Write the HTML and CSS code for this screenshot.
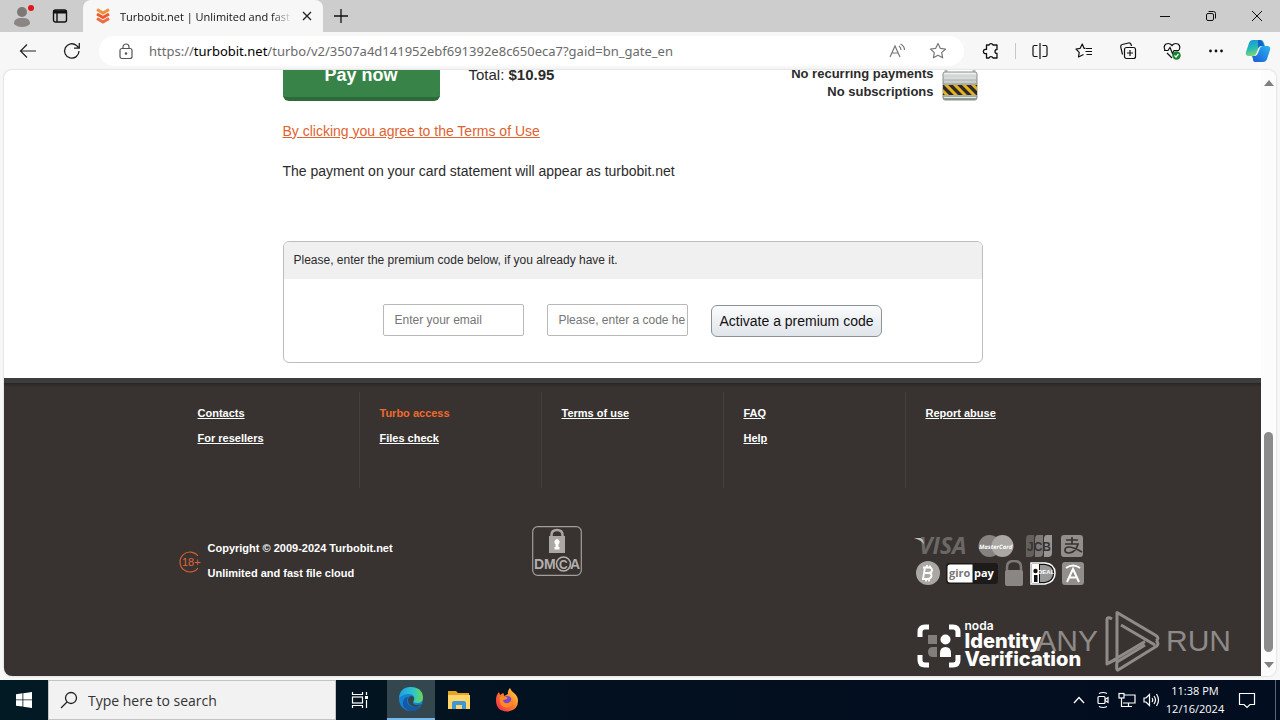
FILE: index.html
```html
<!DOCTYPE html>
<html lang="en">
<head>
<meta charset="utf-8">
<title>Turbobit.net | Unlimited and fast file cloud</title>
<link rel="stylesheet" href="styles.css">
</head>
<body>
<div class="desktop">
  <header class="tabstrip">
    <button class="tool tool-profile" aria-label="Profile"><svg width="24" height="24" viewBox="0 0 24 24"><circle cx="12" cy="8" r="5" fill="#7d7876"/><path d="M4 20c0-5 3-6 8-6s8 1 8 6q-3 3-8 3t-8-3z" fill="#8b8684"/><circle cx="21" cy="4" r="3" fill="#e3141b"/></svg></button>
    <button class="tool tool-tabs" aria-label="Tab actions"><svg width="16" height="16" viewBox="0 0 16 16" fill="none" stroke="#111" stroke-width="1.4"><rect x="1.5" y="2" width="13" height="12" rx="2"/><path d="M1.5 4h13" stroke-width="3"/><path d="M5 4v10"/></svg></button>
    <div class="tab">
      <svg width="14" height="16" viewBox="0 0 14 16" fill="none" stroke-width="3"><path d="M1 1.5l6 3.5 6-3.5" stroke="#f2913d"/><path d="M1 6l6 3.500 6-3.500" stroke="#ef5b2b"/><path d="M1 10.500l6 3.500 6-3.500" stroke="#ee6c43"/></svg>
      <span class="tab-title">Turbobit.net | Unlimited and fast</span>
      <button class="tab-close" aria-label="Close tab"><svg width="10" height="10" viewBox="0 0 10 10" stroke="#222" stroke-width="1.300"><path d="M1 1l8 8M9 1l-8 8"/></svg></button>
    </div>
    <button class="tool tool-new" aria-label="New tab"><svg width="14" height="14" viewBox="0 0 14 14" stroke="#111" stroke-width="1.300"><path d="M7 0v14M0 7h14"/></svg></button>
    <div class="window-buttons">
      <button class="tool" aria-label="Minimize"><svg width="12" height="12" viewBox="0 0 12 12" stroke="#111"><path d="M1 6.500h10"/></svg></button>
      <button class="tool" aria-label="Restore"><svg width="12" height="12" viewBox="0 0 12 12" fill="none" stroke="#111"><rect x="1.500" y="3.500" width="7" height="7" rx="1.500"/><path d="M3.500 1.500h5q2 0 2 2v5"/></svg></button>
      <button class="tool" aria-label="Close"><svg width="12" height="12" viewBox="0 0 12 12" stroke="#111"><path d="M1 1l10 10M11 1L1 11"/></svg></button>
    </div>
  </header>

  <nav class="toolbar">
    <button class="tool" aria-label="Back"><svg width="18" height="16" viewBox="0 0 18 16" fill="none" stroke="#222" stroke-width="1.200"><path d="M17 8H1.500M8 1.500L1.500 8 8 14.500"/></svg></button>
    <button class="tool" aria-label="Refresh"><svg width="18" height="18" viewBox="0 0 18 18" fill="none" stroke="#222" stroke-width="1.300"><path d="M16 9a7.200 7.200 0 1 1-2.500-5.500L16 6M16.300 1v5.200H11"/></svg></button>
    <div class="address">
      <svg width="14" height="17" viewBox="0 0 14 17" fill="none" stroke="#555" stroke-width="1.200"><rect x="1" y="5.500" width="12" height="10" rx="2"/><path d="M4 5.500V4a3 3 0 0 1 6 0v1.500"/><circle cx="7" cy="10.500" r=".7" fill="#555"/></svg>
      <div class="url" role="textbox" aria-label="Address">https://<b class="host">turbobit.net</b>/turbo/v2/3507a4d141952ebf691392e8c650eca7?gaid=bn_gate_en</div>
      <button class="tool" aria-label="Read aloud"><svg width="18" height="16" viewBox="0 0 18 16" fill="none" stroke="#777" stroke-width="1.200"><path d="M1 14L6 3l5 11M3 10h6M10 3q2 1.500 2 4M11.500 1q4 2 4 6"/></svg></button>
      <button class="tool" aria-label="Add to favorites"><svg width="18" height="18" viewBox="0 0 18 18" fill="none" stroke="#777" stroke-width="1.200" stroke-linejoin="round"><path d="M9 1.500l2.300 4.800 5.200.7-3.800 3.600.9 5.200L9 13.300l-4.600 2.500.9-5.200L1.500 7l5.200-.7z"/></svg></button>
    </div>
    <button class="tool" aria-label="Extensions"><svg width="18" height="18" viewBox="0 0 18 18" fill="none" stroke="#111" stroke-width="1.300" stroke-linejoin="round"><path d="M4.500 3H7a2.100 2.100 0 0 1 4 0h4v4.500a2 2 0 0 0 0 4V16h-4a2.100 2.100 0 0 0-4 0H4.500v-4.500a2.200 2.200 0 1 1 0-4z"/></svg></button>
    <span class="separator"></span>
    <button class="tool" aria-label="Split screen"><svg width="18" height="18" viewBox="0 0 18 18" fill="none" stroke="#111" stroke-width="1.200"><path d="M6.500 3.500h-3q-1.500 0-1.500 1.500v8q0 1.500 1.500 1.500h3M11.500 3.500h3q1.500 0 1.500 1.500v8q0 1.500-1.500 1.500h-3M9 1v16"/></svg></button>
    <button class="tool" aria-label="Favorites"><svg width="18" height="18" viewBox="0 0 18 18" fill="none" stroke="#111" stroke-width="1.200" stroke-linejoin="round"><path d="M10.500 6.300H9L7.300 2 5.200 6.300l-4.200.7 3.200 3.300L3.500 15l5-2.500M11 6.500h6M10.500 9.500H17M11.500 12.500H17"/></svg></button>
    <button class="tool" aria-label="Collections"><svg width="18" height="18" viewBox="0 0 18 18" fill="none" stroke="#111" stroke-width="1.200"><rect x="5.500" y="5.500" width="11" height="11" rx="2"/><path d="M11 8v6M8 11h6M3.500 12.500L1.700 5q-.3-2 1.500-2.500L9.500 1q2-.3 2.600 1.500L12.500 4"/></svg></button>
    <button class="tool" aria-label="Browser essentials"><svg width="18" height="18" viewBox="0 0 18 18" fill="none" stroke="#111" stroke-width="1.200"><path d="M2 8q-2-4 1-6 3.500-1.500 6 1.500Q11.500.5 15 2q3 2 1 6M1 8.500h4l2-3 2.500 6L11 8.500h5M4 11l5 5"/><circle cx="13.500" cy="13.500" r="4.200" fill="#19802c" stroke="none"/><path d="M11.500 13.500l1.500 1.500 2.500-3" stroke="#fff"/></svg></button>
    <button class="tool" aria-label="Settings and more"><svg width="16" height="4" viewBox="0 0 16 4" fill="#111"><circle cx="2.500" cy="2" r="1.400"/><circle cx="8" cy="2" r="1.400"/><circle cx="13.500" cy="2" r="1.400"/></svg></button>
    <button class="tool tool-copilot" aria-label="Copilot"><svg width="26" height="24" viewBox="0 0 26 24"><defs><linearGradient id="ca" x1="0" y1="0" x2=".3" y2="1"><stop offset="0" stop-color="#1493dd"/><stop offset=".6" stop-color="#28bdb5"/><stop offset="1" stop-color="#84d56e"/></linearGradient><linearGradient id="cb" x1="0" y1="1" x2="1" y2="0"><stop offset="0" stop-color="#1c58d8"/><stop offset="1" stop-color="#27b6ee"/></linearGradient></defs><path d="M8 1h8q2 0 3 3l1 3h-4q-2 0-3 3l-2 5q-1 2-3 2H4q-4 0-3-4L4 4q1-3 4-3z" fill="url(#ca)"/><path d="M18 23h-8q-2 0-2-3l-1-3h3q2 0 3-3l2-5q1-2 3-2h4q4 0 3 4l-3 9q-1 3-4 3z" fill="url(#cb)"/><path d="M15 1q2 0 3 3l1 3h-3q-2 0-3 2V1z" fill="#1461cb"/></svg></button>
  </nav>

  <div class="viewport">
    <div class="page">
      <main class="content">
        <section class="pay">
          <button class="pay-button">Pay now</button>
          <p class="total">Total: <b>$10.95</b></p>
          <p class="notice">No recurring payments<br>No subscriptions</p>
          <svg class="padlock" width="36" height="40" viewBox="0 0 36 40"><defs><linearGradient id="pl" x1="0" y1="0" x2="0" y2="1"><stop offset="0" stop-color="#e6ebe9"/><stop offset=".45" stop-color="#a4aba8"/><stop offset=".7" stop-color="#cdd2cf"/><stop offset="1" stop-color="#84908a"/></linearGradient><clipPath id="pc"><rect x="1" y="24" width="34" height="10"/></clipPath></defs><path d="M4 12V8Q4 1 12 1h12q8 0 8 7v4" fill="none" stroke="#b3bab7" stroke-width="3"/><rect x="1" y="11" width="34" height="28" rx="2" fill="url(#pl)" stroke="#8b9590"/><path d="M2 12.500h32M2 17h32M2 21h32" stroke="#fff" opacity=".6"/><g clip-path="url(#pc)"><rect y="24" width="36" height="10" fill="#2e2a28"/><path d="M-6 23l12 12M3 23l12 12M12 23l12 12M21 23l12 12M30 23l12 12" stroke="#e9b21d" stroke-width="3"/></g><path d="M2 36.500h32" stroke="#e4ebe7"/></svg>
        </section>
        <p class="terms"><a href="#terms">By clicking you agree to the Terms of Use</a></p>
        <p class="statement">The payment on your card statement will appear as turbobit.net</p>
        <form class="premium">
          <h2 class="premium-title">Please, enter the premium code below, if you already have it.</h2>
          <div class="premium-fields">
            <input class="field" type="email" placeholder="Enter your email" aria-label="Enter your email">
            <input class="field" type="text" placeholder="Please, enter a code here" aria-label="Please, enter a code here">
            <button class="activate" type="button">Activate a premium code</button>
          </div>
        </form>
      </main>

      <footer class="footer">
        <div class="footer-inner">
          <nav class="links">
            <div class="link-column"><a href="#contacts">Contacts</a><a href="#resellers">For resellers</a></div>
            <div class="link-column"><a class="current" href="#turbo">Turbo access</a><a href="#files">Files check</a></div>
            <div class="link-column"><a href="#terms">Terms of use</a></div>
            <div class="link-column"><a href="#faq">FAQ</a><a href="#help">Help</a></div>
            <div class="link-column"><a href="#abuse">Report abuse</a></div>
          </nav>
          <div class="legal">
            <div class="copyright">
              <svg width="24" height="24" viewBox="0 0 24 24"><path d="M20 6A10 10 0 1 0 20 18" fill="none" stroke="#d4602f" stroke-width="1.200"/><text x="4" y="16" font-size="11" fill="#e0673a">18+</text></svg>
              <div class="copyright-text"><p>Copyright © 2009-2024 Turbobit.net</p><p>Unlimited and fast file cloud</p></div>
            </div>
            <svg class="dmca" width="50" height="50" viewBox="0 0 50 50"><rect x=".7" y=".7" width="48.600" height="48.600" rx="5" fill="none" stroke="#a19e9c" stroke-width="1.200"/><path d="M19.500 10V9q0-5 5.500-5t5.500 5v1" fill="none" stroke="#a8a5a3" stroke-width="2.500"/><rect x="17" y="10" width="16" height="17" fill="#aaa7a5"/><path d="M25 13a3 3 0 0 1 1.500 5.300V21h1v2.500h-5V21h1v-2.700A3 3 0 0 1 25 13z" fill="#fff"/><text x="2" y="43" font-size="14" font-weight="700" fill="#b3b0ae">DM</text><text x="38" y="43" font-size="14" font-weight="700" fill="#b3b0ae">A</text><circle cx="31.500" cy="38" r="7" fill="#383330" stroke="#b3b0ae" stroke-width="1.600"/><text x="27" y="42.500" font-size="12" font-weight="700" fill="#b3b0ae">C</text></svg>
            <div class="payments">
              <div class="pay-row">
                <svg width="54" height="24" viewBox="0 0 54 24"><text x="5" y="20" font-size="23" font-weight="700" font-style="italic" font-family="Open Sans, sans-serif" fill="#6b6866">VISA</text><path d="M0 4h6q3 0 4 6Q7 6 0 4z" fill="#c2bfbd"/></svg>
                <svg width="40" height="24" viewBox="-2 0 40 24"><circle cx="11.500" cy="12" r="11" fill="#858280"/><circle cx="24.500" cy="12" r="11" fill="#aaa7a5"/><text x="1" y="14.500" font-size="7" font-weight="700" font-style="italic" font-family="Open Sans, sans-serif" fill="#fff" text-rendering="geometricPrecision"><tspan font-size="6">MasterCard</tspan></text></svg>
                <svg width="28" height="24" viewBox="0 0 28 24"><path d="M4 1h5v18q0 4-4 4H1V5q0-4 3-4z" fill="#625f5d"/><path d="M13 1h5v18q0 4-4 4h-4V5q0-4 3-4z" fill="#7b7876"/><path d="M22 1h5v18q0 4-4 4h-4V5q0-4 3-4z" fill="#989593"/><text x="2" y="16.500" font-size="12" font-weight="700" fill="#383330">JCB</text></svg>
                <svg width="22" height="24" viewBox="0 0 22 24"><rect y="1" width="22" height="22" rx="3" fill="#918e8c"/><path d="M5 6h12M11 3v7M4 10h13q-2 8-9 9-4 0-4-3t4-3q4 0 13 5" fill="none" stroke="#383330" stroke-width="1.700"/></svg>
              </div>
              <div class="pay-row">
                <svg width="26" height="26" viewBox="-2 0 26 26"><circle cx="12" cy="13" r="12" fill="#aaa7a5"/><path d="M9 7l-2 12M7 7.500h6.500q3 .5 2.500 3t-3.500 2.500H9M12.500 13q3.500.5 3 3t-3.500 3H6M11 5v2.500M14 5.500v2.500M10 19v2.500M13 19v2.500" fill="none" stroke="#fff" stroke-width="1.800"/></svg>
                <svg width="52" height="26" viewBox="0 0 52 26"><rect y="3" width="52" height="21" rx="3" fill="#1d1b1a"/><path d="M4 4.500h22.500v18H4Q1.500 22.500 1.500 20V7q0-2.500 2.500-2.500z" fill="#fff"/><text x="3" y="17" font-size="11" font-weight="700" font-family="Open Sans, sans-serif" fill="#777">giro</text><text x="28" y="17" font-size="11" font-weight="700" font-family="Open Sans, sans-serif" fill="#fff">pay</text></svg>
                <svg width="20" height="26" viewBox="0 0 20 26"><path d="M3 12V7q0-6 7-6t7 6v5" fill="none" stroke="#7c7977" stroke-width="2.500"/><rect x="1" y="10" width="18" height="16" rx="2" fill="#898684"/></svg>
                <svg width="26" height="26" viewBox="0 0 26 26"><path d="M1 3h14q10 1 10 10T15 24H1z" fill="#111" stroke="#fff" stroke-width="1.500"/><path d="M10 5h5q8 1 8 8t-8 9h-5z" fill="#999"/><path d="M2 4h7v19H2z" fill="#fff"/><circle cx="5.500" cy="11" r="2.200" fill="#111"/><path d="M4 15h3.500v7H4z" fill="#111"/><text x="8" y="14" font-size="6" font-weight="700" fill="#fff">DEAL</text></svg>
                <svg width="22" height="26" viewBox="0 0 22 26"><rect y="2" width="22" height="23" rx="3" fill="#918e8c"/><path d="M4 8q7-5 14 0M5 22l6-13 6 13M7.500 17.500h7" fill="none" stroke="#fff" stroke-width="2"/></svg>
              </div>
              <div class="noda">
                <svg width="44" height="44" viewBox="0 0 44 44"><path d="M3 13V8q0-5 5-5h4M32 3h4q5 0 5 5v5M3 31v5q0 5 5 5h4M41 31v5q0 5-5 5h-4" fill="none" stroke="#fff" stroke-width="5"/><path d="M11 11h9v9h-9zM20 33h-4q-5 0-5-5t5-5h4z" fill="#817e7b"/><circle cx="28.500" cy="15.500" r="5" fill="#fff"/><path d="M23 33v-4q0-6 5.500-6t5.500 6v4z" fill="#fff"/></svg>
                <div class="noda-text"><span class="noda-name">noda</span><span>Identity</span><span>Verification</span></div>
              </div>
            </div>
          </div>
        </div>
      </footer>
      <div class="watermark">
        <span>ANY</span>
        <svg width="56" height="62" viewBox="0 0 56 62" fill="none" stroke="currentColor" stroke-width="3" stroke-linejoin="round"><path d="M8 9q-5-3-5 1v44L41 31.500M3 54l10-5V2.500l39 23q4 3 0 5M17 15l34 20M52 30.500q4 3 0 6L14 60q-2 1-1-8l28-17"/></svg>
        <span>RUN</span>
      </div>
    </div>
    <div class="scrollbar">
      <span class="arrow arrow-up"></span>
      <span class="track-gap"></span>
      <span class="thumb"></span>
      <span class="arrow arrow-down"></span>
    </div>
  </div>

  <footer class="taskbar">
    <button class="task" aria-label="Start"><svg width="16" height="16" viewBox="0 0 16 16" fill="#fff"><path d="M0 2.200l6.500-.9v6.200H0zM7.300 1.200L16 0v7.500H7.300zM0 8.300h6.500v6.300L0 13.700zM7.300 8.300H16V16l-8.700-1.200z"/></svg></button>
    <label class="search"><svg width="18" height="18" viewBox="0 0 18 18" fill="none" stroke="#222" stroke-width="1.300"><circle cx="11" cy="7" r="5.500"/><path d="M7 11L1 17"/></svg><input type="text" placeholder="Type here to search" aria-label="Type here to search"></label>
    <button class="task" aria-label="Task view"><svg width="18" height="16" viewBox="0 0 18 16" fill="none" stroke="#fff" stroke-width="1.200"><path d="M1.500 0v2.500h10V0M1.500 16v-2.500h10V16M15.500 0v3M15.500 8v8"/><rect x="1.500" y="5" width="10" height="6"/><path d="M14 5.500h3" stroke-width="3"/></svg></button>
    <button class="task task-active" aria-label="Microsoft Edge"><svg width="24" height="24" viewBox="0 0 24 24"><defs><linearGradient id="eg" x1="0" y1=".3" x2="1" y2=".3"><stop offset="0" stop-color="#209fe0"/><stop offset=".6" stop-color="#30c4cc"/><stop offset="1" stop-color="#6bd84c"/></linearGradient></defs><circle cx="12" cy="12" r="12" fill="#1583d4"/><path d="M0 11Q1 0 12 0t12 10q0 6-6 6-5 0-3-3 1-6-5-6-6 0-10 4z" fill="url(#eg)"/><path d="M9 10q-3 8 5 10 4 1 8-1-4 6-11 5-8-2-7-9 1-5 5-5z" fill="#1459a8"/><path d="M15 13q-3 4 2 5 4 0 6-1-2 3-7 3-7-1-7-7 0-4 4-4 3 1 2 4z" fill="#34474f"/></svg></button>
    <button class="task" aria-label="File Explorer"><svg width="22" height="20" viewBox="0 0 22 20"><path d="M0 1h8l2 2h11v16H0z" fill="#e4a424"/><path d="M0 5h22v14H0z" fill="#ffd667"/><path d="M4 19v-6q0-2 2-2h10q2 0 2 2v6h-4v-4H8v4z" fill="#3e96d7"/></svg></button>
    <button class="task" aria-label="Firefox"><svg width="24" height="24" viewBox="0 0 24 24"><defs><linearGradient id="fx" x1="1" y1="0" x2="0" y2="1"><stop offset="0" stop-color="#ffe14a"/><stop offset=".5" stop-color="#ff7a2a"/><stop offset="1" stop-color="#ef1f55"/></linearGradient></defs><path d="M15 0q1 3 4 5 4 3 4 8 0 10-11 10.500Q1 23 1 12q0-5 3-8l1 3 3-2q1 0 1 3 2-1 4-2-1-3 2-6z" fill="url(#fx)"/><circle cx="12" cy="13" r="5" fill="#7746cf"/><path d="M5 9q5-2 8 1-2 2-5 2 1 4 5 3 4-1 3-6 4 4 1 8-6 5-11 0-2-4-1-8z" fill="#ff8a24"/></svg></button>
    <div class="tray">
      <button class="tray-item" aria-label="Show hidden icons"><svg width="12" height="8" viewBox="0 0 12 8" fill="none" stroke="#fff" stroke-width="1.300"><path d="M1 7l5-5.500L11 7"/></svg></button>
      <button class="tray-item" aria-label="Meet now"><svg width="14" height="18" viewBox="0 0 14 18" fill="none" stroke="#fff" stroke-width="1.200"><rect x="2" y="5.500" width="7" height="7" rx="1"/><path d="M9 8.500l3-2v5l-3-2M3 2.500q4-2 8 0M3 15.500q4 2 8 0"/></svg></button>
      <button class="tray-item" aria-label="Network"><svg width="18" height="16" viewBox="0 0 18 16" fill="none" stroke="#fff" stroke-width="1.200"><path d="M6 3h11v8H5M10.500 11v3.500M7 14.500h7M3.500 6v8.500H7"/><rect x="1" y="1.500" width="5" height="4.500"/></svg></button>
      <button class="tray-item" aria-label="Volume"><svg width="17" height="14" viewBox="0 0 17 14" fill="none" stroke="#fff" stroke-width="1.200"><path d="M1 5h2l3.500-3.500v11L3 9H1zM9 5q1.500 2 0 4M11 3q3 4 0 8M13.500 1q4 6 0 12"/></svg></button>
      <button class="clock"><span>11:38 PM</span><span>12/16/2024</span></button>
      <button class="tray-item tray-notify" aria-label="Notifications"><svg width="18" height="17" viewBox="0 0 18 17" fill="none" stroke="#fff" stroke-width="1.200"><path d="M1.500 1.500h15v11H12l-3 3-3-3H1.500z"/></svg></button>
      <span class="show-desktop"></span>
    </div>
  </footer>
</div>
</body>
</html>
```
FILE: styles.css
```css
* { box-sizing: border-box; }

body {
  margin: 0;
  font-family: "Liberation Sans", Arial, sans-serif;
  font-size: 14px;
  color: #2b2b2b;
}

button {
  border: 0;
  padding: 0;
  background: none;
  font: inherit;
  color: inherit;
}

p, h2 { margin: 0; }
svg { display: block; flex: none; }

.desktop {
  display: flex;
  flex-direction: column;
  height: 100vh;
  background: #f7f7f7;
}

/* Browser chrome */
.tabstrip {
  display: flex;
  height: 32px;
  background: #cdcdcd;
  font-family: "Open Sans", "Noto Sans", sans-serif;
}

.tool {
  display: flex;
  align-items: center;
  justify-content: center;
  width: 44px;
}

.tool-tabs { width: 32px; }
.tool-new { width: 36px; }

.tab {
  display: flex;
  align-items: center;
  gap: 10px;
  width: 240px;
  margin-left: 7px;
  padding: 0 11px 0 13px;
  border-radius: 8px 8px 0 0;
  background: #f7f7f7;
}

.tab-title {
  flex: 1;
  overflow: hidden;
  white-space: nowrap;
  font-size: 11px;
  color: #111;
  mask-image: linear-gradient(to right, #000 88%, transparent);
}

.window-buttons {
  display: flex;
  margin-left: auto;
}

.window-buttons .tool { width: 46px; }

.toolbar {
  display: flex;
  align-items: stretch;
  height: 38px;
  padding: 4px 2px 4px 6px;
}

.address {
  display: flex;
  flex: 1;
  align-items: center;
  min-width: 0;
  margin: 0 5px;
  padding: 0 6px 0 20px;
  border-radius: 15px;
  background: #fff;
}

.address .tool { width: 40px; }

.url {
  flex: 1;
  overflow: hidden;
  margin-left: 16px;
  font-family: "Noto Sans", "Open Sans", sans-serif;
  font-size: 13px;
  white-space: nowrap;
  color: #6a6a6a;
}

.host {
  font-weight: 400;
  color: #000;
}

.separator {
  width: 1px;
  margin: 7px 2px;
  background: #c8c8c8;
}

.toolbar .tool-copilot { width: 40px; }

/* Web page */
.viewport {
  display: flex;
  flex: 1;
  min-height: 0;
  margin: 0 4px 4px;
  overflow: hidden;
  border-radius: 8px;
  background: #fff;
  box-shadow: 0 0 2px #bbb;
}

.page {
  position: relative;
  display: flex;
  flex: 1;
  flex-direction: column;
  justify-content: flex-end;
  min-width: 0;
  overflow: hidden;
}

.content {
  width: 100%;
  max-width: 700px;
  margin: 0 auto;
  padding-bottom: 15px;
}

.pay {
  display: flex;
  align-items: flex-end;
}

.pay-button {
  width: 157px;
  height: 48px;
  border-bottom: 4px solid #2c6a3a;
  border-radius: 6px;
  background: #388448;
  font-size: 18px;
  font-weight: 700;
  color: #fff;
}

.total {
  margin: 0 auto 17px 29px;
  font-size: 15px;
  line-height: 18px;
}

.notice {
  font-size: 13px;
  font-weight: 700;
  line-height: 18px;
  text-align: right;
}

.padlock { margin: 0 5px 0 8px; }

.terms {
  margin-top: 20px;
  line-height: 20px;
}

.terms a { color: #e0622f; }

.statement {
  margin-top: 20px;
  line-height: 20px;
}

.premium {
  margin-top: 60px;
  overflow: hidden;
  border: 1px solid #bdbdbd;
  border-radius: 6px;
}

.premium-title {
  padding: 10px;
  background: #f0f0f0;
  font-size: 12px;
  font-weight: 400;
  line-height: 17px;
}

.premium-fields {
  display: flex;
  justify-content: center;
  gap: 23px;
  padding: 25px 0;
}

.field {
  width: 141px;
  height: 32px;
  padding: 0 2px 0 10px;
  border: 1px solid #b9b9b9;
  border-radius: 2px;
  font: inherit;
  font-size: 12px;
}

.field::placeholder { color: #757575; }

.activate {
  height: 32px;
  margin-top: 1px;
  padding: 0 7px;
  border: 1px solid #8d9298;
  border-radius: 6px;
  background: linear-gradient(#fafbfc, #e0e5ea);
  color: #111;
}

/* Page footer */
.footer {
  padding-top: 9px;
  border-top: 5px solid #3c3d3e;
  background: linear-gradient(#282625, #383330 4px);
  font-size: 11px;
  font-weight: 700;
  color: #fff;
}

.footer-inner {
  max-width: 912px;
  margin: 0 auto;
}

.links {
  display: grid;
  grid-template-columns: repeat(5, 182px);
}

.link-column {
  display: flex;
  flex-direction: column;
  align-items: flex-start;
  gap: 11px;
  min-height: 96px;
  padding: 14px 20px;
  border-left: 1px solid #45403d;
  line-height: 14px;
}

.link-column:first-child { border-left-color: transparent; }
.link-column a { color: #fff; }

.link-column .current {
  color: #f06a2d;
  text-decoration: none;
}

.legal {
  display: grid;
  grid-template-columns: 355px 1fr 175px;
  padding: 38px 0 8px;
}

.copyright {
  display: flex;
  gap: 6px;
  padding: 15px 0 0 1px;
}

.copyright > svg {
  margin-top: 9px;
  font-weight: 400;
}

.copyright-text {
  display: grid;
  gap: 11px;
  align-content: start;
  line-height: 14px;
}

.payments { padding-top: 8px; }

.pay-row {
  display: flex;
  align-items: center;
  justify-content: space-between;
  width: 170px;
  margin-bottom: 2px;
}

.noda {
  display: flex;
  gap: 4px;
  align-items: flex-end;
  margin-top: 34px;
  padding: 0 0 0 3px;
}

.noda-text {
  display: flex;
  flex-direction: column;
  font-family: Inter, sans-serif;
  font-size: 20px;
  font-weight: 800;
  line-height: 18px;
}

.noda-name {
  font-size: 12px;
  font-weight: 600;
  line-height: 12px;
}

.watermark {
  position: absolute;
  right: 30px;
  bottom: 4px;
  display: flex;
  align-items: center;
  gap: 6px;
  font-family: "Liberation Sans Narrow", "Liberation Sans", sans-serif;
  font-size: 30px;
  color: rgba(200, 198, 196, 0.6);
}

.scrollbar {
  display: flex;
  flex-direction: column;
  align-items: center;
  width: 15px;
  background: #fcfcfc;
}

.arrow {
  margin: 10px 0 8px;
  border: 5px solid transparent;
  border-top-width: 0;
  border-bottom-width: 0;
}

.arrow-up { border-bottom: 6px solid #808080; }
.arrow-down { border-top: 6px solid #808080; }
.track-gap { flex: 339; }

.thumb {
  flex: 220;
  width: 9px;
  border-radius: 5px;
  background: #8b8b8b;
}

/* Taskbar */
.taskbar {
  display: flex;
  height: 40px;
  background: linear-gradient(to right, #021a24, #03101f 50%, #020d20);
  font-family: "Open Sans", "Noto Sans", sans-serif;
  color: #fff;
}

.task {
  display: flex;
  align-items: center;
  justify-content: center;
  width: 48px;
}

.search {
  display: flex;
  align-items: center;
  gap: 10px;
  width: 288px;
  padding: 0 11px;
  border: 1px solid #c4c4c4;
  background: #f2f2f2;
}

.search input {
  flex: 1;
  min-width: 0;
  padding: 0;
  border: 0;
  background: none;
  font: inherit;
  font-size: 14px;
}

.search input::placeholder { color: #333; }

.task-active {
  margin-left: 3px;
  border-bottom: 2px solid #76b9ed;
  background: #34474f;
}

.tray {
  display: flex;
  align-items: stretch;
  margin-left: auto;
}

.tray-item {
  display: flex;
  align-items: center;
  justify-content: center;
  width: 24px;
}

.clock {
  display: flex;
  flex-direction: column;
  align-items: center;
  justify-content: center;
  width: 64px;
  font-size: 11px;
  line-height: 18px;
}

.tray-notify { width: 40px; }

.show-desktop {
  width: 5px;
  margin-left: 8px;
  border-left: 1px solid #5b6470;
}
```
